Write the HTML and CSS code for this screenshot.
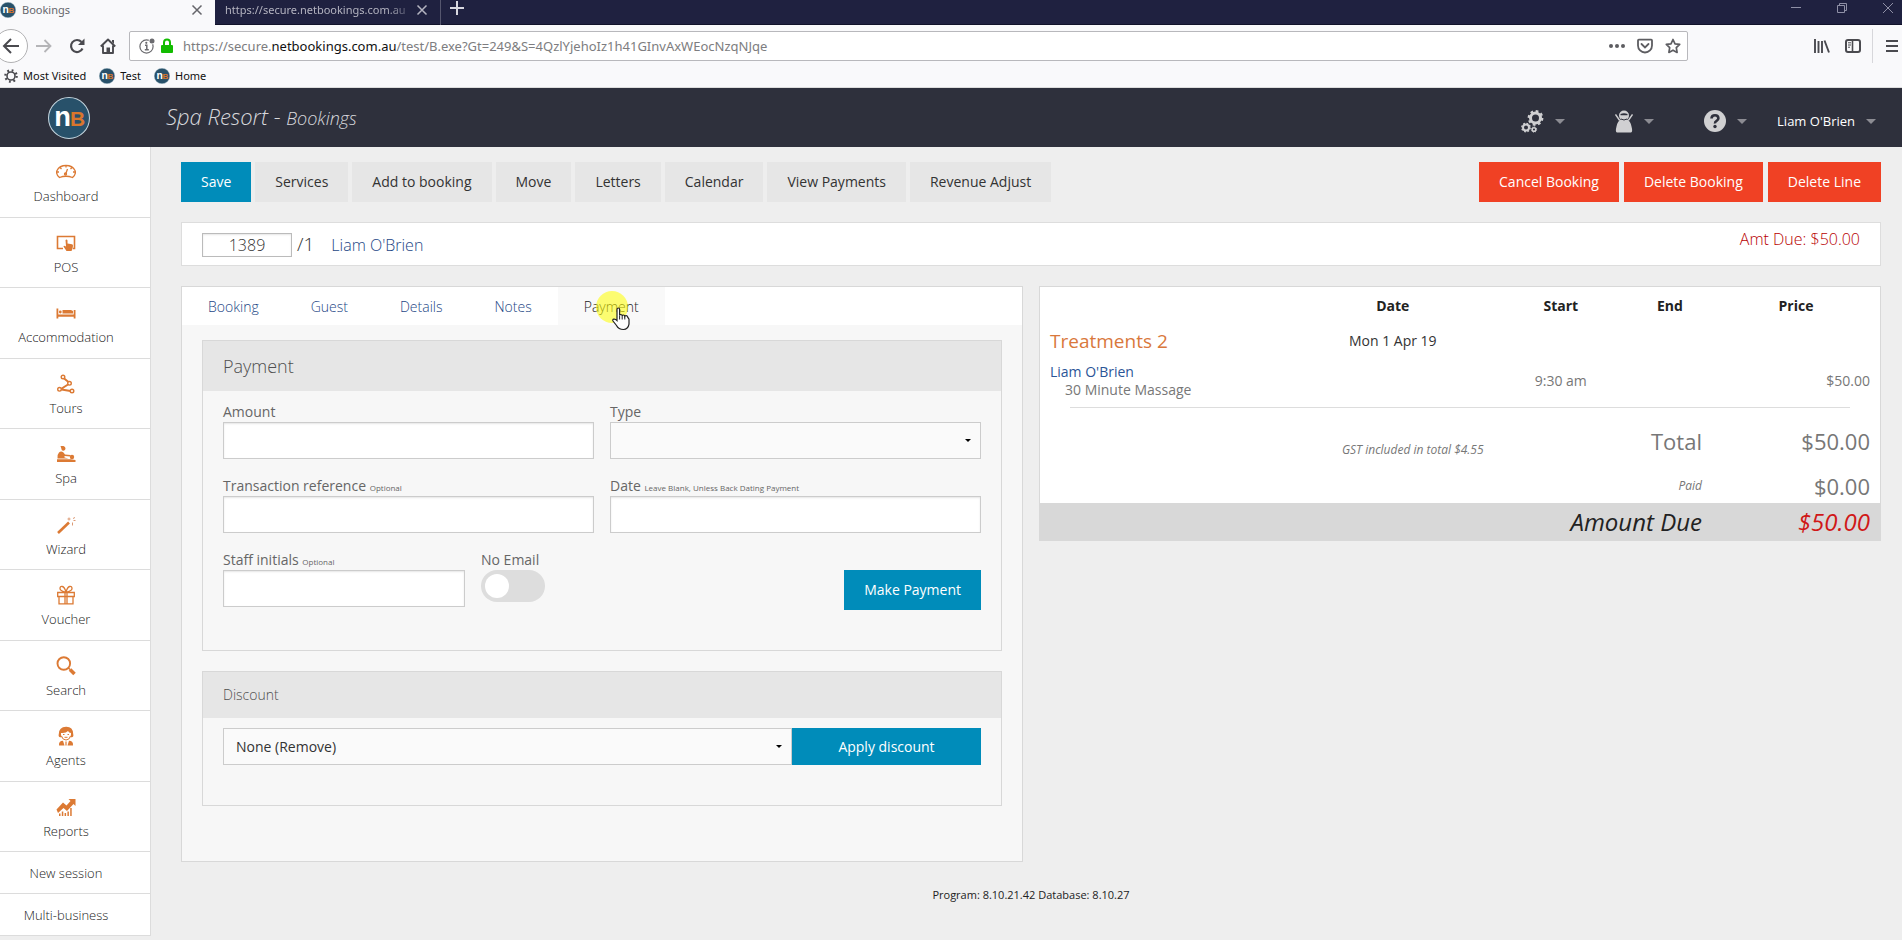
FILE: index.html
```html
<!DOCTYPE html>
<html lang="en">
<head>
<meta charset="utf-8">
<title>Bookings</title>
<link rel="stylesheet" href="styles.css">
</head>
<body>
<svg class="defs" aria-hidden="true">
  <symbol id="logo" viewBox="0 0 40 40">
    <circle cx="20" cy="20" r="19.5" fill="#28516a" stroke="#c3d3dc" stroke-width="1"/>
    <text x="6" y="28" class="logo-n">n</text>
    <text x="21" y="28" class="logo-b">B</text>
  </symbol>
  <symbol id="close" viewBox="0 0 12 12"><path d="M1.500 1.500l9 9M10.500 1.500l-9 9" fill="none" stroke="currentColor" stroke-width="1.500"/></symbol>
  <symbol id="caret" viewBox="0 0 10 5"><path d="M0 0h10L5 5z" fill="#8c8c93"/></symbol>
</svg>

<div class="browser">
  <div class="tabstrip">
    <div class="tab tab-active">
      <svg class="favicon"><use href="#logo"/></svg>
      <span class="tab-title">Bookings</span>
      <button class="plain" aria-label="Close tab"><svg class="x-icon"><use href="#close"/></svg></button>
    </div>
    <div class="tab tab-idle">
      <span class="tab-title tab-fade">https://secure.netbookings.com.au</span>
      <button class="plain" aria-label="Close tab"><svg class="x-icon"><use href="#close"/></svg></button>
    </div>
    <button class="plain new-tab" aria-label="New tab"><svg width="16" height="16" viewBox="0 0 16 16"><path d="M8 1v14M1 8h14" stroke="currentColor" stroke-width="2"/></svg></button>
    <div class="window-controls">
      <button class="plain" aria-label="Minimise"><svg width="10" height="10" viewBox="0 0 10 10"><path d="M0 4.500h10" stroke="currentColor"/></svg></button>
      <button class="plain" aria-label="Restore"><svg width="10" height="10" viewBox="0 0 10 10" fill="none" stroke="currentColor"><path d="M.5 2.500h7v7h-7zM2.500 2.500v-2h7v7h-2"/></svg></button>
      <button class="plain" aria-label="Close"><svg width="10" height="10" viewBox="0 0 10 10"><path d="M0 0l10 10M10 0L0 10" stroke="currentColor"/></svg></button>
    </div>
  </div>
  <div class="toolbar">
    <button class="plain back" aria-label="Back"><svg width="18" height="18" viewBox="0 0 18 18"><path d="M17 9H2M9 2L2 9l7 7" fill="none" stroke="#4a4a4f" stroke-width="2"/></svg></button>
    <button class="plain forward" aria-label="Forward"><svg width="16" height="16" viewBox="0 0 16 16"><path d="M0 8h14M8.500 2l6 6-6 6" fill="none" stroke="#b5b5b8" stroke-width="1.800"/></svg></button>
    <button class="plain reload" aria-label="Reload"><svg width="16" height="16" viewBox="0 0 16 16"><path d="M13.500 10.500A6 6 0 1 1 12.500 4" fill="none" stroke="#4a4a4f" stroke-width="2.200"/><path d="M15.500.5v6.500H9z" fill="#4a4a4f"/></svg></button>
    <button class="plain home" aria-label="Home"><svg width="16" height="16" viewBox="0 0 16 16"><path d="M.8 8.500L8 1.500l7.200 7M3 7.500v7.500h10V7.500" fill="none" stroke="#4a4a4f" stroke-width="1.900" stroke-linejoin="round"/><path d="M6.500 15V9.500h3.500V15z" fill="#4a4a4f"/><path d="M12 2h2v4l-2-2z" fill="#4a4a4f"/></svg></button>
    <div class="urlbar">
      <svg width="16" height="16" viewBox="0 0 16 16"><circle cx="7.500" cy="8.500" r="6.600" fill="none" stroke="#6b6b6f" stroke-width="1.200"/><path d="M6 7.200h1.800v4.300M5.800 11.700h4" fill="none" stroke="#6b6b6f" stroke-width="1.500"/><circle cx="7.300" cy="4.800" r="1.100" fill="#6b6b6f"/><circle cx="13" cy="3" r="3.400" fill="#fff"/><circle cx="13" cy="3" r="2.500" fill="#6b6b6f"/></svg>
      <svg width="12" height="16" viewBox="0 0 12 16"><path d="M3 8V4.500a3 3 0 0 1 6 0V8" fill="none" stroke="#12bc00" stroke-width="2"/><rect y="7" width="12" height="8" rx="1" fill="#12bc00"/></svg>
      <span class="url">https://secure.<b>netbookings.com.au</b>/test/B.exe?Gt=249&amp;S=4QzlYjehoIz1h41GInvAxWEocNzqNJqe</span>
      <svg width="16" height="16" viewBox="0 0 16 16" fill="#5d5d61"><circle cx="2" cy="8" r="2"/><circle cx="8" cy="8" r="2"/><circle cx="14" cy="8" r="2"/></svg>
      <svg width="16" height="16" viewBox="0 0 16 16" fill="none" stroke="#5d5d61" stroke-width="1.800"><path d="M1 2.500q0-.8.8-.8h12.400q.8 0 .8.800V7.500a7 7 0 0 1-14 0z"/><path d="M4.500 6L8 9.500 11.500 6" stroke-linecap="round"/></svg>
      <svg width="16" height="16" viewBox="0 0 16 16"><path d="M8 1.500l2 4.300 4.700.6-3.400 3.300.8 4.700L8 12.200l-4.100 2.200.8-4.700L1.300 6.400 6 5.800z" fill="none" stroke="#5d5d61" stroke-width="1.700" stroke-linejoin="round"/></svg>
    </div>
    <div class="tool-icons">
      <svg width="16" height="16" viewBox="0 0 16 16" stroke="#4a4a4f" stroke-width="1.900"><path d="M1 1v14M4.500 3v12M8 3v12M10.500 2.500l4.500 12"/></svg>
      <svg width="16" height="16" viewBox="0 0 16 16" fill="none" stroke="#4a4a4f"><rect x="1" y="2" width="14" height="12" rx="2" stroke-width="2"/><path d="M7.500 2v12" stroke-width="1.600"/><path d="M3 4.800h3M3 7h3M3 9.200h2"/></svg>
      <button class="plain menu" aria-label="Menu"><svg width="12" height="16" viewBox="0 0 12 16"><path d="M0 3h12M0 8h12M0 13h12" stroke="#4a4a4f" stroke-width="1.900"/></svg></button>
    </div>
  </div>
  <div class="bookmarks">
    <a href="#"><svg width="14" height="14" viewBox="0 0 14 14"><circle cx="7" cy="7" r="4" fill="none" stroke="#4a4a4f" stroke-width="1.600"/><circle cx="7" cy="7" r="5.700" fill="none" stroke="#4a4a4f" stroke-width="2.200" stroke-dasharray="1.800 2.677"/></svg>Most Visited</a>
    <a href="#"><svg class="favicon"><use href="#logo"/></svg>Test</a>
    <a href="#"><svg class="favicon"><use href="#logo"/></svg>Home</a>
  </div>
</div>

<header class="header">
  <a class="brand" href="#" aria-label="Home page"><svg width="42" height="42"><use href="#logo"/></svg></a>
  <h1>Spa Resort - <small>Bookings</small></h1>
  <div class="header-menu">
    <button class="plain" aria-label="Settings">
      <svg width="23" height="23" viewBox="0 0 23 23" fill="none" stroke="#d0d0d2"><circle cx="14.500" cy="8" r="5" stroke-width="3"/><circle cx="14.500" cy="8" r="6.800" stroke-width="2.200" stroke-dasharray="2.700 2.640"/><circle cx="5" cy="17.500" r="3" stroke-width="2"/><circle cx="5" cy="17.500" r="4.200" stroke-width="1.400" stroke-dasharray="1.700 1.599"/><circle cx="13" cy="19.500" r="1.800" stroke-width="1.500"/><circle cx="13" cy="19.500" r="2.700" stroke-width="1" stroke-dasharray="1 1.121"/></svg>
      <svg class="caret"><use href="#caret"/></svg>
    </button>
    <button class="plain" aria-label="Staff">
      <svg width="18" height="23" viewBox="0 0 18 23"><path d="M6 9.500q-3.500 1.500-4.500 7Q0 22 2 22.500h14q2-.5.500-6-1-5.500-4.500-7z" fill="#d0d0d2"/><circle cx="9" cy="5.500" r="5" fill="#d0d0d2"/><path d="M5.500 4q3.500-1.500 7 0v1.200h-7z" fill="#2e303c"/><path d="M6 9q3 2 6 0" fill="none" stroke="#2e303c"/><path d="M.5 4.500l4.200 6M17.500 4.500l-4.200 6" stroke="#d0d0d2" stroke-width="1.400"/></svg>
      <svg class="caret"><use href="#caret"/></svg>
    </button>
    <button class="plain" aria-label="Help">
      <svg width="22" height="22" viewBox="0 0 22 22"><circle cx="11" cy="11" r="11" fill="#d0d0d2"/><path d="M7.500 8.500Q7.700 5.300 11 5.300t3.400 3q0 1.600-1.800 2.600T11 13.500" fill="none" stroke="#2e303c" stroke-width="2.600"/><circle cx="11" cy="16.500" r="1.700" fill="#2e303c"/></svg>
      <svg class="caret"><use href="#caret"/></svg>
    </button>
    <button class="plain user">Liam O'Brien <svg class="caret"><use href="#caret"/></svg></button>
  </div>
</header>

<div class="app">
  <nav class="sidebar">
    <a href="#"><svg viewBox="0 0 20 20" fill="none" stroke="#dc7a34" stroke-width="1.300"><path d="M3.500 15.500Q-.5 12 1 8.500 3.500 3.500 10 3.500t9 5q1.500 3.500-2.500 7-6.500-2.500-13 0z" stroke-linejoin="round"/><path d="M10 3.500v2M1 10h2M17 10h2M4 5.500l1.500 1.500M16 5.500l-1.500 1.500M11.500 7L9.500 12.500"/><circle cx="9.500" cy="12" r="1"/></svg>Dashboard</a>
    <a href="#"><svg viewBox="0 0 20 20"><path d="M7 15.500H1.500v-12h17v12H17" fill="none" stroke="#dc7a34" stroke-width="1.600"/><path d="M9.500 7q1.500-1 2 .5v3l4.500.8q1 .3 1 1.500l-.5 3-1 2.200h-5l-3-4.500q0-1.500 2.500 0z" fill="#dc7a34"/></svg>POS</a>
    <a href="#"><svg viewBox="0 0 20 20" fill="#dc7a34"><path d="M.5 5.500h1.800v6h15.400V7h1.800v8.500h-1.800v-1.800H2.300v1.800H.5z"/><circle cx="4.300" cy="9" r="1.400"/><path d="M6.500 7h8.500l2 1v2.500H6.500z"/></svg>Accommodation</a>
    <a href="#"><svg viewBox="0 0 20 20" fill="none" stroke="#dc7a34"><path d="M7.800 4.200l5 4M12 10.500l-7 4.500M5.500 15.500l9 1.500" stroke-width="2"/><circle cx="7" cy="3" r="1.800" fill="#fff" stroke-width="1.400"/><circle cx="13.500" cy="9.300" r="1.800" fill="#fff" stroke-width="1.400"/><circle cx="3.500" cy="15.300" r="1.800" fill="#fff" stroke-width="1.400"/><circle cx="16" cy="17" r="1.800" fill="#fff" stroke-width="1.400"/></svg>Tours</a>
    <a href="#"><svg viewBox="0 0 20 20" fill="#dc7a34"><path d="M4.500 2h3q2 .5 2 2.500T7.500 6.800 5.300 4.500z"/><path d="M3 8.500q2-1.800 4.500 0l1.500 2 5.500.5v1.500L8.500 12v1.500l4 1H1.500q-.5-4 1.500-6z"/><circle cx="16" cy="13" r="2.200"/><path d="M1 15.200h13.500l5 .8v2H1z"/></svg>Spa</a>
    <a href="#"><svg viewBox="0 0 20 20"><path d="M2 18L13 7.500" stroke="#dc7a34" stroke-width="2.600"/><path d="M13 2.500v3M11.500 4h3M16.500 7.500v3M18.500 2l-1 2M17.500 5.500h2" stroke="#dc9a74"/></svg>Wizard</a>
    <a href="#"><svg viewBox="0 0 20 20" fill="none" stroke="#dc7a34" stroke-width="1.300"><path d="M1.700 7.500h16.600v4H1.700zM3 11.500v7.300h14v-7.300M9 7.500v11M11 7.500v11M10 7.200Q4 6 4 3.500t2.300-2T10 7.200Q16 6 16 3.500t-2.300-2T10 7.200"/></svg>Voucher</a>
    <a href="#"><svg viewBox="0 0 20 20" fill="none" stroke="#dc7a34"><circle cx="7.800" cy="7.500" r="6.300" stroke-width="1.900"/><path d="M12.500 12l1.500 1.500" stroke-width="1.500"/><path d="M14 13.500l4.500 4.500" stroke-width="3.500"/></svg>Search</a>
    <a href="#"><svg viewBox="0 0 20 20"><path d="M2.800 8Q3 1 10 .8T17.200 8q.8 3-1.500 3.200H4.300Q2 11 2.800 8z" fill="#dc7a34"/><path d="M5 7q5 .5 7-2 1 2 3 2v1.500Q14.500 13.500 10 13.500T5 8.500z" fill="#fff"/><path d="M5.500 10q1 4 4.500 4t4.500-4" fill="none" stroke="#dc7a34"/><path d="M7 8.500h1.500M11.500 8.500H13M8.500 11.300h3" stroke="#dc7a34"/><path d="M3 19.500q-.5-4.500 4-4.700l1.500 4.700zM17 19.500q.5-4.500-4-4.700l-1.500 4.700z" fill="#dc7a34"/><path d="M10 15.500v4" stroke="#dc7a34" stroke-width="1.200"/></svg>Agents</a>
    <a href="#"><svg viewBox="0 0 20 20" fill="#dc7a34"><path d="M.5 12.500L7 5.500l3.500 3 4-4.500-2-2h7v7l-2-2-6.500 7L7.500 11l-5.500 5z"/><path d="M3 16.500h1.500V19H3zM5.800 14.500h1.500V19H5.800zM8.600 16h1.500v3H8.600zM11.400 14.500h1.500V19h-1.500zM14.200 11h1.500v8h-1.500z"/></svg>Reports</a>
    <a class="short" href="#">New session</a>
    <a class="short" href="#">Multi-business</a>
  </nav>

  <main class="main">
    <div class="actions">
      <button class="btn btn-primary">Save</button>
      <button class="btn">Services</button>
      <button class="btn">Add to booking</button>
      <button class="btn">Move</button>
      <button class="btn">Letters</button>
      <button class="btn">Calendar</button>
      <button class="btn">View Payments</button>
      <button class="btn">Revenue Adjust</button>
      <div class="danger-actions">
        <button class="btn btn-danger">Cancel Booking</button>
        <button class="btn btn-danger">Delete Booking</button>
        <button class="btn btn-danger">Delete Line</button>
      </div>
    </div>

    <section class="summary">
      <input class="booking-no" type="text" value="1389" aria-label="Booking number">
      <span class="line-no">/1</span>
      <a href="#">Liam O'Brien</a>
      <span class="due">Amt Due: $50.00</span>
    </section>

    <div class="columns">
      <section class="panel">
        <div class="tabs" role="tablist">
          <button role="tab">Booking</button>
          <button role="tab">Guest</button>
          <button role="tab">Details</button>
          <button role="tab">Notes</button>
          <button role="tab" class="selected" aria-selected="true">Payment
            <span class="spot"></span>
            <svg class="pointer" width="18" height="24" viewBox="0 0 18 24"><path d="M5 13.500V2.500q0-1.500 1.300-1.500t1.300 1.500v6q.2-1 1.300-1t1.300 1.300q.2-.8 1.300-.8t1.300 1.300q.3-.6 1.400-.6t1.500 1.500l1.300 2v5q-1 5.300-5.500 5.300-5 0-7-4L1 14q-.7-1.500.8-1.800T5 13.500z" fill="#fff" stroke="#222" stroke-width="1.200"/><path d="M7.600 8.500v4M10.200 9v3.500M12.800 9.500v3" stroke="#222"/></svg>
          </button>
        </div>
        <div class="panel-body">
          <section class="card">
            <h2>Payment</h2>
            <form class="form">
              <div class="field"><label for="amount">Amount</label><input id="amount" type="text"></div>
              <div class="field"><label for="type">Type</label><span class="select"><select id="type"><option></option></select></span></div>
              <div class="field"><label for="ref">Transaction reference <small>Optional</small></label><input id="ref" type="text"></div>
              <div class="field"><label for="date">Date <small>Leave Blank, Unless Back Dating Payment</small></label><input id="date" type="text"></div>
              <div class="last-row">
                <div class="field staff"><label for="staff">Staff initials <small>Optional</small></label><input id="staff" type="text"></div>
                <div class="field"><label for="noemail">No Email</label><input id="noemail" class="switch" type="checkbox"></div>
                <button type="button" class="btn btn-primary pay">Make Payment</button>
              </div>
            </form>
          </section>
          <section class="card">
            <h3>Discount</h3>
            <form class="discount">
              <span class="select"><select aria-label="Discount"><option>None (Remove)</option></select></span>
              <button type="button" class="btn btn-primary">Apply discount</button>
            </form>
          </section>
        </div>
      </section>

      <section class="invoice">
        <table>
          <colgroup><col class="c-item"><col class="c-date"><col class="c-start"><col class="c-end"><col></colgroup>
          <thead><tr><th></th><th>Date</th><th>Start</th><th>End</th><th>Price</th></tr></thead>
          <tbody>
            <tr class="group"><td class="group-name">Treatments 2</td><td class="day">Mon 1 Apr 19</td><td></td><td></td><td></td></tr>
            <tr class="item"><td><a href="#">Liam O'Brien</a><div class="service">30 Minute Massage</div></td><td></td><td>9:30 am</td><td></td><td class="num">$50.00</td></tr>
            <tr class="rule"><td colspan="5"><hr></td></tr>
            <tr class="total"><td></td><td class="num note">GST included in total $4.55</td><td colspan="2" class="num big">Total</td><td class="num big">$50.00</td></tr>
            <tr class="paid"><td></td><td></td><td colspan="2" class="num note">Paid</td><td class="num big">$0.00</td></tr>
            <tr class="amount-due"><td></td><td></td><td colspan="2" class="num">Amount Due</td><td class="num owed">$50.00</td></tr>
          </tbody>
        </table>
      </section>
    </div>

    <footer>Program: 8.10.21.42 Database: 8.10.27</footer>
  </main>
</div>
</body>
</html>
```

FILE: styles.css
```css
* { box-sizing: border-box; }
body { margin: 0; background: #eee; color: #222; font: 14px/20px "Open Sans", "Noto Sans", sans-serif; overflow: hidden; }
a { color: #2b5597; text-decoration: none; }
svg { flex: none; display: block; }
button, input, select { font: inherit; }
.defs { position: absolute; width: 0; height: 0; }
.plain { display: flex; align-items: center; background: none; border: 0; padding: 0; color: inherit; }
.logo-n, .logo-b { font: bold 26px "Liberation Sans", Arial, sans-serif; }
.logo-n { fill: #fff; }
.logo-b { fill: #d9762d; font-size: 20px; }
.favicon { width: 16px; height: 16px; }

/* Browser frame */
.browser { font-family: "Noto Sans", "Open Sans", sans-serif; background: #f9f9fb; border-bottom: 1px solid #ddd; }
.tabstrip { display: flex; height: 25px; background: #1f2140; color: #d8d8e0; border-bottom: 1px solid #11122a; font-size: 11px; }
.tab { display: flex; align-items: center; height: 25px; padding-bottom: 6px; }
.tab-active { width: 215px; padding-right: 12px; background: #f9f9fb; color: #66666b; }
.tab-title { flex: 1; margin-left: 6px; white-space: nowrap; overflow: hidden; }
.tab-idle { width: 226px; padding-left: 4px; padding-right: 12px; border-right: 1px solid #55566e; color: #b4b4c0; }
.tab-fade { -webkit-mask-image: linear-gradient(90deg, #000 85%, transparent); mask-image: linear-gradient(90deg, #000 85%, transparent); }
.x-icon { width: 12px; height: 12px; }
.new-tab { margin-left: 8px; padding-bottom: 9px; }
.window-controls { display: flex; gap: 36px; margin-left: auto; padding: 0 9px 9px 0; color: #8f90a6; }
.toolbar { display: flex; align-items: center; height: 41px; }
.back { width: 34px; height: 34px; margin-left: -6px; padding-left: 7px; border: 1px solid #b1b1b3; border-radius: 50%; background: #fff; }
.forward { margin-left: 8px; }
.reload { margin-left: 17px; }
.home { margin-left: 15px; }
.urlbar { flex: 1; display: flex; align-items: center; height: 30px; margin-left: 13px; padding: 0 6px 0 9px; gap: 6px; background: #fff; border: 1px solid #b8b8bc; border-radius: 2px; }
.urlbar svg:nth-of-type(n+4) { margin-left: 6px; }
.url { flex: 1; margin-left: 4px; color: #7d7d80; font-size: 13px; white-space: nowrap; }
.url b { font-weight: 400; color: #111; }
.tool-icons { display: flex; align-items: center; gap: 15px; margin: 0 4px 0 126px; }
.menu { height: 34px; margin-left: -4px; padding-left: 13px; border-left: 1px solid #d7d7db; }
.bookmarks { display: flex; align-items: center; gap: 13px; height: 21px; padding: 0 4px 2px; font-size: 11px; }
.bookmarks a { display: flex; align-items: center; gap: 5px; color: #111; }

/* Application header */
.header { display: flex; align-items: center; height: 59px; background: #2e303c; color: #fff; }
.brand { width: 166px; padding-left: 48px; }
h1 { margin: 0; padding-bottom: 2px; color: #d8d8dc; font-size: 22px; line-height: 30px; font-weight: 300; font-style: italic; }
h1 small { font-size: 18px; }
.header-menu { display: flex; align-items: center; gap: 50px; margin: 7px 26px 0 auto; }
.header-menu button { gap: 11px; }
.header-menu .user { margin-left: -20px; font-size: 13px; }
.caret { width: 10px; height: 5px; }

/* Sidebar */
.app { display: flex; align-items: flex-start; }
.sidebar { width: 151px; background: #fff; border-right: 1px solid #dcdcdc; }
.sidebar a { display: flex; flex-direction: column; align-items: center; height: 70px; padding: 15px 18px 0 0; gap: 4px; color: #222; font-weight: 300; font-size: 13px; border-bottom: 1px solid #dcdcdc; }
.sidebar a:nth-child(odd) { height: 71px; }
.sidebar svg { width: 20px; height: 20px; }
.sidebar a.short { height: 42px; padding-top: 11px; }

/* Main area */
.main { flex: 1; min-width: 0; padding: 15px 21px 0 30px; }
.actions { display: flex; gap: 4px; margin-bottom: 20px; }
.btn { height: 40px; padding: 0 20px; border: 0; background: #e6e6e6; color: #333; font-size: 14px; white-space: nowrap; }
.btn-primary { background: #008cba; color: #fff; }
.btn-danger { background: #f04124; color: #fff; }
.danger-actions { display: flex; gap: 5px; margin-left: auto; }
.summary { display: flex; align-items: center; height: 44px; padding: 2px 20px 0; background: #fff; border: 1px solid #ddd; font-size: 16px; font-weight: 300; }
.summary a, .tabs button { color: #1d4685; }
.booking-no { width: 90px; height: 24px; padding: 0; border: 1px solid #bbb; box-shadow: inset 0 1px 2px rgba(0, 0, 0, .1); text-align: center; color: #333; }
.line-no { margin: 0 17px 2px 5px; color: #333; font-size: 19px; }
.due { margin: 0 0 12px auto; color: #b80000; }

.columns { display: grid; grid-template-columns: 1fr 1fr; gap: 16px; align-items: start; margin-top: 20px; }
.panel, .invoice { background: #fff; border: 1px solid #d8d8d8; }
.tabs { display: flex; height: 38px; }
.tabs button { padding: 2px 26px 0; border: 0; background: none; font-weight: 300; }
.tabs .selected { position: relative; background: #f9f9f9; color: #222; }
.spot { position: absolute; left: 38px; top: 4px; width: 32px; height: 32px; border-radius: 50%; background: #ffff00; opacity: .55; }
.pointer { position: absolute; left: 54px; top: 20px; }
.panel-body { padding: 15px 20px 55px; background: #f7f7f7; }
.card { border: 1px solid #d8d8d8; }
.card + .card { margin-top: 20px; }
.card h2, .card h3 { margin: 0; padding: 0 20px; background: #e6e6e6; color: #4f4f4f; font-weight: 300; }
.card h2 { font-size: 18px; line-height: 50px; }
.card h3 { font-size: 14px; line-height: 46px; }
.form { display: grid; grid-template-columns: 1fr 1fr; gap: 16px; padding: 11px 20px 30px; }
.field { display: flex; flex-direction: column; height: 58px; color: #666; }
.field label { height: 20px; line-height: 20px; white-space: nowrap; }
.field small { font-size: 8px; line-height: 8px; }
.field input[type="text"], select { width: 100%; height: 37px; padding: 0 12px; border: 1px solid #ccc; border-radius: 0; background: #fff; box-shadow: inset 0 1px 2px rgba(0, 0, 0, .1); }
.select { position: relative; display: block; flex: 1; }
.select::after { content: ""; position: absolute; right: 10px; top: 17px; border: 3px solid transparent; border-top-color: #000; border-bottom: 0; pointer-events: none; }
select { display: block; appearance: none; background: #fafafa; color: #333; box-shadow: none; }
.last-row { grid-column: 1 / -1; display: flex; gap: 16px; align-items: flex-start; height: 70px; }
.staff { width: 242px; }
.switch { appearance: none; width: 64px; height: 32px; margin: 0; padding: 4px; border-radius: 16px; background: #ddd; }
.switch::before { content: ""; display: block; width: 24px; height: 24px; border-radius: 50%; background: #fff; }
.pay { margin: 20px 0 0 auto; }
.discount { display: flex; padding: 10px 20px 40px; }
.discount .btn { width: 189px; height: 37px; }

/* Invoice */
table { width: 100%; table-layout: fixed; border-collapse: collapse; }
.c-item { width: 30%; }
.c-date { width: 24%; }
.c-start { width: 16%; }
.c-end { width: 10%; }
th, td { padding: 0 10px; text-align: center; white-space: nowrap; }
th { height: 37px; color: #222; }
td:first-child { text-align: left; }
.group td { height: 34px; }
.group-name { color: #d9783c; font-size: 19px; }
.day { color: #333; }
.item td { height: 46px; color: #777; line-height: 18px; }
.service { padding-left: 15px; }
.rule td { padding: 0 30px; }
hr { margin: 3px 0 13px; border: 0; border-top: 1px solid #ddd; }
td.num { text-align: right; }
.total td { height: 44px; padding-bottom: 5px; color: #777; }
.total .note { padding-top: 14px; padding-bottom: 0; }
.paid td { height: 38px; padding-top: 3px; color: #777; }
.note { font-size: 12px; font-style: italic; }
.big { font-size: 22px; }
.amount-due td { height: 37px; background: #d8d8d8; font-size: 24px; font-style: italic; }
.amount-due .owed { color: #d01818; }

footer { margin-top: 24px; text-align: center; color: #222; font-size: 11px; line-height: 18px; }
```
